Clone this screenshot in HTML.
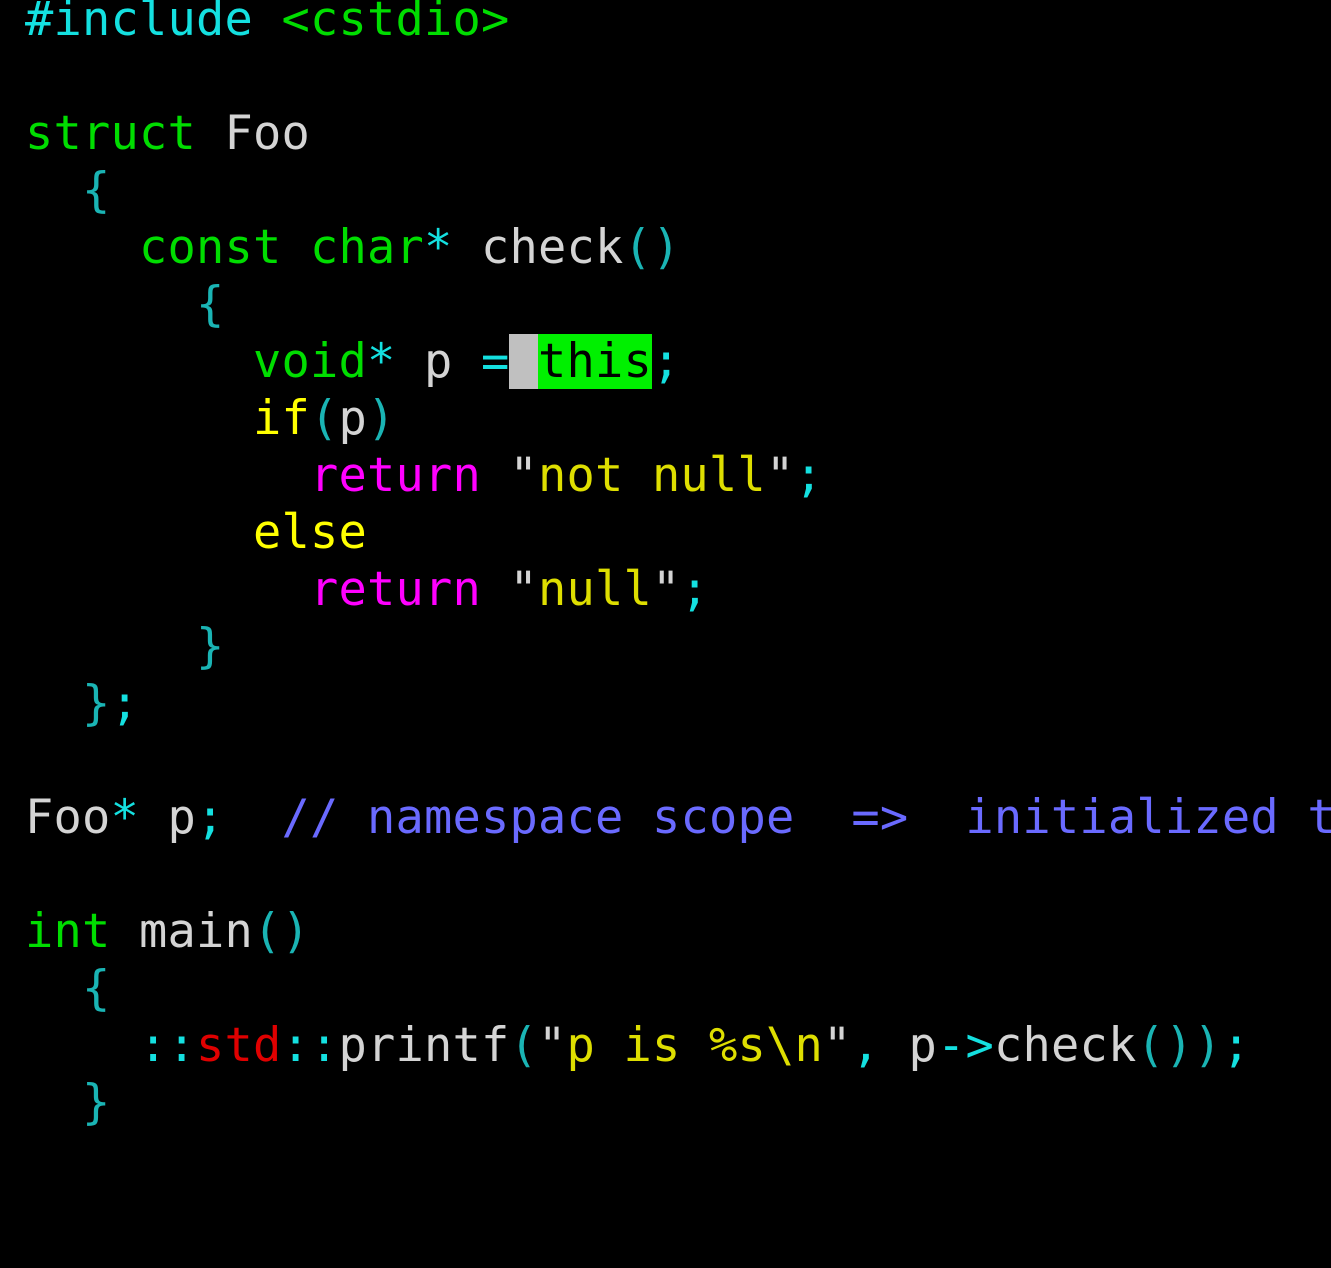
<!DOCTYPE html>
<html><head><meta charset="utf-8"><style>
html,body{margin:0;padding:0;background:#000;width:1331px;height:1268px;overflow:hidden}
pre{position:absolute;left:25px;top:-9px;margin:0;font-family:"DejaVu Sans Mono","Liberation Mono",monospace;font-size:47px;line-height:57px;color:#d4d4d4;white-space:pre;letter-spacing:0.2px}
.c{color:#14e0e0}.b{color:#1ab4b4}.g{color:#00dd00}.y{color:#ffff00}.m{color:#ff00ff}.s{color:#dede00}.bl{color:#6a6aff}.r{color:#e00000}.w{color:#d4d4d4}
.hl{background:#00f000;color:#000}.cur{background:#c0c0c0}
</style></head><body>
<pre><span class="c">#include</span> <span class="g">&lt;cstdio&gt;</span>

<span class="g">struct</span> Foo
  <span class="b">{</span>
    <span class="g">const</span> <span class="g">char</span><span class="c">*</span> check<span class="b">()</span>
      <span class="b">{</span>
        <span class="g">void</span><span class="c">*</span> p <span class="c">=</span><span class="cur"> </span><span class="hl">this</span><span class="c">;</span>
        <span class="y">if</span><span class="b">(</span>p<span class="b">)</span>
          <span class="m">return</span> "<span class="s">not null</span>"<span class="c">;</span>
        <span class="y">else</span>
          <span class="m">return</span> "<span class="s">null</span>"<span class="c">;</span>
      <span class="b">}</span>
  <span class="b">}</span><span class="c">;</span>

Foo<span class="c">*</span> p<span class="c">;</span>  <span class="bl">// namespace scope  =&gt;  initialized t</span>

<span class="g">int</span> main<span class="b">()</span>
  <span class="b">{</span>
    <span class="c">::</span><span class="r">std</span><span class="c">::</span>printf<span class="b">(</span>"<span class="s">p is %s\n</span>"<span class="c">,</span> p<span class="c">-&gt;</span>check<span class="b">())</span><span class="c">;</span>
  <span class="b">}</span>
</pre>
</body></html>
